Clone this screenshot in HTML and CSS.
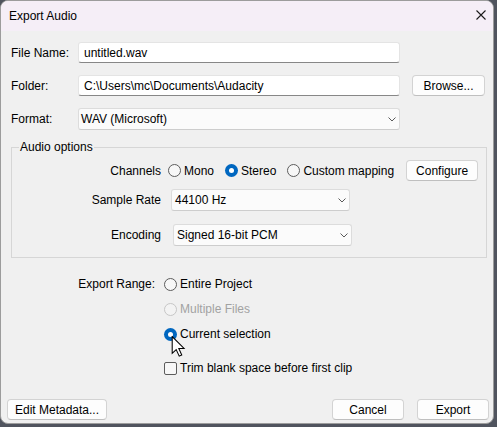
FILE: index.html
```html
<!DOCTYPE html>
<html lang="en">
<head>
<meta charset="utf-8">
<title>Export Audio</title>
<link rel="stylesheet" href="styles.css">
</head>
<body>
<div class="window">
  <div class="titlebar">
    <span class="title">Export Audio</span>
    <span class="close">
      <svg width="10" height="10" viewBox="0 0 10 10"><path d="M0.5 0.5 L9.5 9.5 M9.5 0.5 L0.5 9.5" stroke="#1a1a1a" stroke-width="1.1" fill="none"/></svg>
    </span>
  </div>
  <div class="content">
    <div class="form">
      <span class="flabel">File Name:</span>
      <div class="input">untitled.wav</div>
      <span></span>
      <span class="flabel">Folder:</span>
      <div class="input">C:\Users\mc\Documents\Audacity</div>
      <button class="btn">Browse...</button>
      <span class="flabel">Format:</span>
      <div class="select"><span>WAV (Microsoft)</span><svg class="chev" width="8" height="5" viewBox="0 0 8 5"><path d="M0.5 0.5 L4 4 L7.5 0.5" stroke="#5a5a5a" stroke-width="1" fill="none"/></svg></div>
      <span></span>
    </div>

    <fieldset class="group">
      <legend>Audio options</legend>
      <div class="grow row-channels">
        <span class="glabel">Channels</span>
        <div class="radios">
          <span class="opt"><span class="radio"></span>Mono</span>
          <span class="opt"><span class="radio on"></span>Stereo</span>
          <span class="opt"><span class="radio"></span>Custom mapping</span>
        </div>
        <button class="btn btn-config">Configure</button>
      </div>
      <div class="grow row-rate">
        <span class="glabel">Sample Rate</span>
        <div class="select sel-rate"><span>44100 Hz</span><svg class="chev" width="8" height="5" viewBox="0 0 8 5"><path d="M0.5 0.5 L4 4 L7.5 0.5" stroke="#5a5a5a" stroke-width="1" fill="none"/></svg></div>
      </div>
      <div class="grow row-enc">
        <span class="glabel">Encoding</span>
        <div class="select sel-enc"><span>Signed 16-bit PCM</span><svg class="chev" width="8" height="5" viewBox="0 0 8 5"><path d="M0.5 0.5 L4 4 L7.5 0.5" stroke="#5a5a5a" stroke-width="1" fill="none"/></svg></div>
      </div>
    </fieldset>

    <div class="range">
      <span class="rlabel">Export Range:</span>
      <div class="ropts">
        <span class="opt rrow"><span class="radio"></span>Entire Project</span>
        <span class="opt rrow disabled"><span class="radio dis"></span>Multiple Files</span>
        <span class="opt rrow"><span class="radio on"></span>Current selection</span>
        <span class="opt rrow crow"><span class="check"></span>Trim blank space before first clip</span>
      </div>
    </div>

    <div class="footer">
      <button class="btn btn-meta">Edit Metadata...</button>
      <span class="spacer"></span>
      <button class="btn btn-small">Cancel</button>
      <button class="btn btn-small btn-export">Export</button>
    </div>
  </div>
</div>
<svg class="cursor" width="15" height="21" viewBox="0 0 13 20">
  <path d="M0.5 0.5 L0.5 16.5 L4.3 12.9 L7.2 19.2 L9.6 18.1 L6.8 11.9 L11.8 11.9 Z" fill="#ffffff" stroke="#000000" stroke-width="1" stroke-linejoin="miter"/>
</svg>
</body>
</html>
```

FILE: styles.css
```css
* {
  box-sizing: border-box;
}

html, body {
  margin: 0;
  height: 100%;
}

body {
  background: #50545e;
  font-family: "Liberation Sans", Arial, sans-serif;
  font-size: 12px;
  color: #000;
  position: relative;
  overflow: hidden;
}

.window {
  width: 494px;
  height: 424px;
  border: 1px solid #9c9c9c;
  border-radius: 8px;
  background: #f0f0f0;
  overflow: hidden;
  display: flex;
  flex-direction: column;
}

.titlebar {
  height: 30px;
  flex: none;
  background: #f5eef7;
  display: flex;
  align-items: center;
  justify-content: space-between;
  padding-left: 8px;
}

.title {
  line-height: 14px;
}

.close {
  width: 24px;
  height: 30px;
  display: flex;
  align-items: center;
  justify-content: center;
  padding-bottom: 2px;
}

.close svg {
  display: block;
}

.content {
  flex: 1;
  display: flex;
  flex-direction: column;
}

.form {
  display: grid;
  grid-template-columns: 55px 322px 73px;
  grid-template-rows: 21px 21px 22px;
  column-gap: 12px;
  row-gap: 12px;
  align-items: center;
  padding: 11px 0 0 10px;
}

.flabel {
  white-space: nowrap;
}

.input {
  height: 21px;
  background: #fff;
  border: 1px solid #e4e4e4;
  border-bottom-color: #878787;
  border-radius: 3px;
  padding-left: 5px;
  display: flex;
  align-items: center;
}

.select {
  height: 22px;
  background: #fbfbfb;
  border: 1px solid #dcdcdc;
  border-bottom-color: #cdcdcd;
  border-radius: 3px;
  display: flex;
  align-items: center;
  justify-content: space-between;
  padding: 0 3px 0 2px;
}

.chev {
  display: block;
}

.btn {
  height: 21px;
  background: #fdfdfd;
  border: 1px solid #d3d3d3;
  border-bottom-color: #bfbfbf;
  border-radius: 4px;
  display: flex;
  align-items: center;
  justify-content: center;
  font: inherit;
  color: #000;
  padding: 0;
}

.group {
  margin: 10px 0 0 10px;
  width: 476px;
  border: 1px solid #d6d6d6;
  padding: 5px 0 11px 7px;
  min-width: 0;
}

.group legend {
  padding: 0 1px;
  line-height: 15px;
}

.grow {
  display: flex;
  align-items: center;
}

.glabel {
  width: 142px;
  flex: none;
  text-align: right;
  white-space: nowrap;
}

.row-channels {
  height: 21px;
}

.radios {
  display: flex;
  align-items: center;
  gap: 11px;
  margin-left: 7px;
  white-space: nowrap;
}

.opt {
  display: flex;
  align-items: center;
  gap: 3px;
  white-space: nowrap;
}

.radio {
  width: 13px;
  height: 13px;
  flex: none;
  border-radius: 50%;
  border: 1px solid #5c5c5c;
  background: #f7f7f7;
}

.radio.on {
  border: none;
  background: #0067c0;
  display: flex;
  align-items: center;
  justify-content: center;
}

.radio.on::after {
  content: "";
  width: 5px;
  height: 5px;
  border-radius: 50%;
  background: #fff;
}

.radio.dis {
  border-color: #c6c6c6;
  background: #f3f3f3;
}

.btn-config {
  width: 72px;
  margin-left: 12px;
}

.row-rate {
  margin-top: 8px;
}

.row-enc {
  margin-top: 13px;
}

.sel-rate {
  width: 179px;
  margin-left: 10px;
}

.sel-enc {
  width: 179px;
  margin-left: 12px;
}

.sel-rate, .sel-enc {
  padding-left: 3px;
}

.range {
  display: flex;
  margin: 18px 0 0 10px;
}

.rlabel {
  width: 144px;
  text-align: right;
  line-height: 16px;
  flex: none;
  white-space: nowrap;
}

.ropts {
  display: flex;
  flex-direction: column;
  gap: 9px;
  margin-left: 9px;
}

.rrow {
  height: 16px;
}

.disabled {
  color: #a2a2a2;
}

.crow {
  margin-top: 9px;
}

.check {
  width: 13px;
  height: 13px;
  flex: none;
  border: 1px solid #5c5c5c;
  border-radius: 2px;
  background: #f7f7f7;
}

.footer {
  margin-top: auto;
  display: flex;
  align-items: center;
  padding: 0 4px 3px 6px;
}

.btn-meta {
  width: 100px;
}

.spacer {
  flex: 1;
}

.btn-small {
  width: 72px;
}

.btn-export {
  margin-left: 13px;
}

.cursor {
  position: absolute;
  left: 171px;
  top: 336px;
}
```
